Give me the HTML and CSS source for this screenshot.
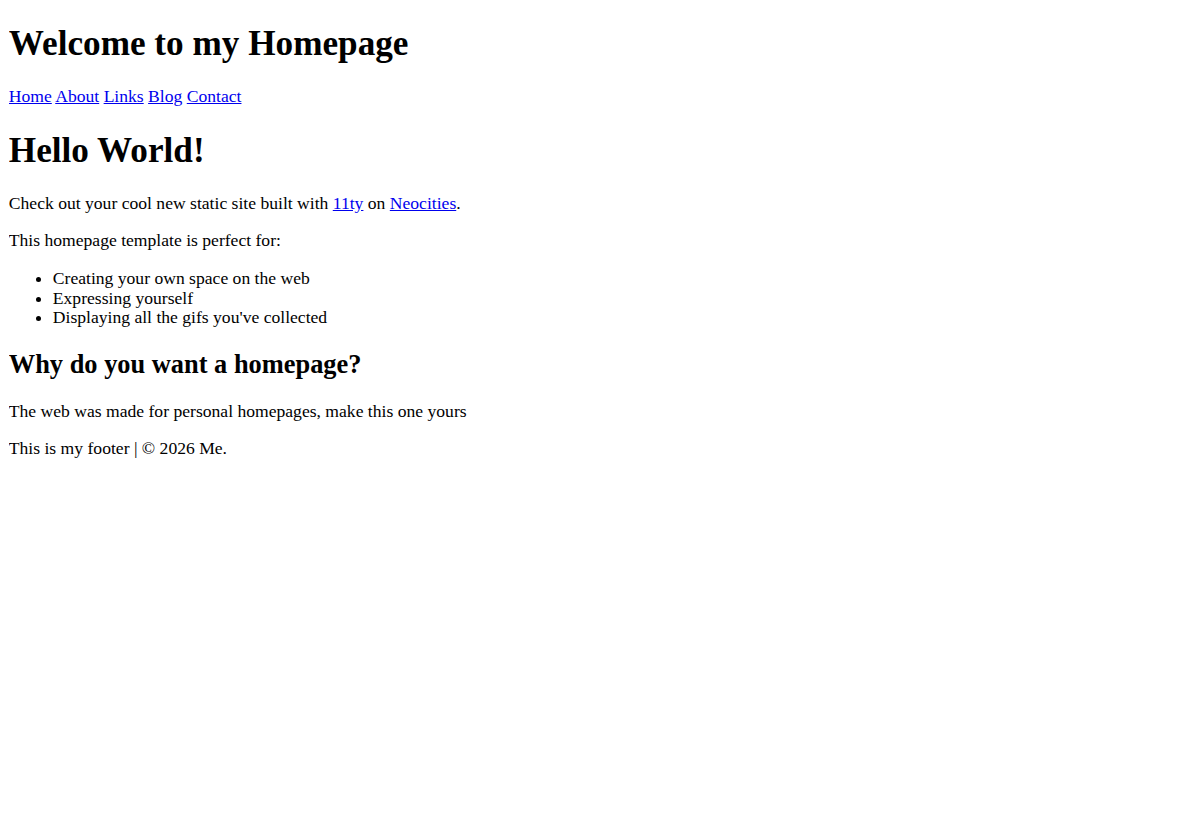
FILE: index.html
```html
<!DOCTYPE html>
<html lang="en">
<head>
<meta charset="utf-8">
<title>Welcome to my Homepage</title>
<link rel="stylesheet" href="styles.css">
</head>
<body class="page">
<header class="site-header">
  <h1 class="site-title">Welcome to my Homepage</h1>
  <nav class="site-nav"><a class="nav-link" href="#">Home</a> <a class="nav-link" href="#">About</a> <a class="nav-link" href="#">Links</a> <a class="nav-link" href="#">Blog</a> <a class="nav-link" href="#">Contact</a></nav>
</header>
<main class="content">
  <h1 class="heading">Hello World!</h1>
  <p class="text">Check out your cool new static site built with <a class="link" href="#">11ty</a> on <a class="link" href="#">Neocities</a>.</p>
  <p class="text">This homepage template is perfect for:</p>
  <ul class="list">
    <li>Creating your own space on the web</li>
    <li>Expressing yourself</li>
    <li>Displaying all the gifs you've collected</li>
  </ul>
  <h2 class="subheading">Why do you want a homepage?</h2>
  <p class="text">The web was made for personal homepages, make this one yours</p>
</main>
<footer class="site-footer">
  <p class="text">This is my footer | © 2026 Me.</p>
</footer>
</body>
</html>
```
FILE: styles.css
```css
.page {
  margin: 8.8px;
  font-family: "Liberation Serif", "Times New Roman", serif;
  font-size: 17.6px;
  line-height: 1.125;
  color: #000;
  background: #fff;
}
.site-title, .heading {
  font-size: 2em;
  margin: 0.67em 0;
  font-weight: bold;
}
.site-title {
  margin-top: 15.5px;
}
.subheading {
  font-size: 1.5em;
  margin: 0.83em 0;
  font-weight: bold;
}
.text {
  margin: 1em 0;
}
.list {
  margin: 1em 0;
  padding-left: 44px;
}
.nav-link, .link {
  color: #0000ee;
  text-decoration: underline;
}
```
